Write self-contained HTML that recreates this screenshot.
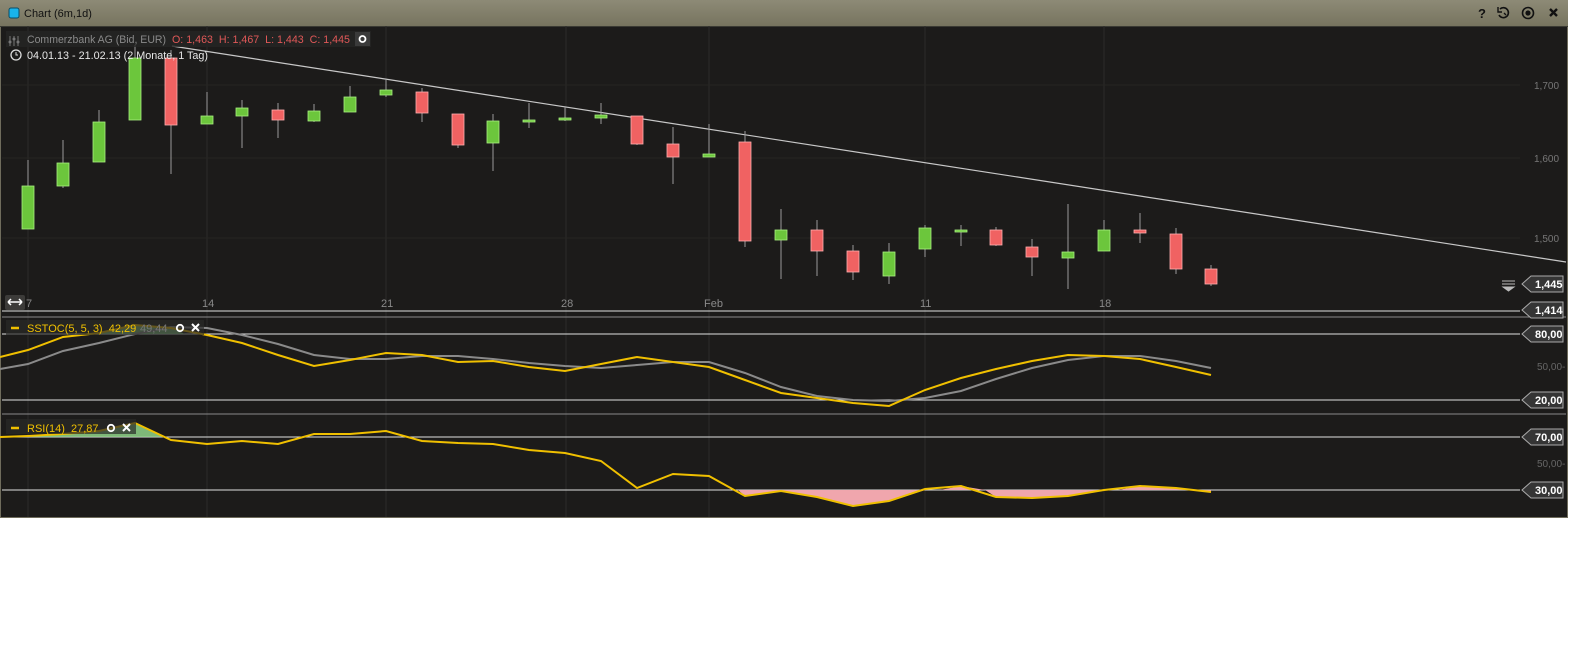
<!DOCTYPE html>
<html><head><meta charset="utf-8"><style>
body{margin:0;width:1578px;height:648px;background:#fff;overflow:hidden;font-family:"Liberation Sans",sans-serif}
#w{position:absolute;left:0;top:0;width:1568px;height:518px;background:#1c1b1a;border:1px solid #6f6c5c;box-sizing:border-box}
#t{position:absolute;left:0;top:0;width:1568px;height:26px;background:linear-gradient(#8d8a76,#77745f);border-bottom:1px solid #3a3a33}
svg{position:absolute;left:0;top:0}
</style></head><body>
<div id="w"></div>
<div id="t"></div>
<svg id="s" width="1578" height="648" font-family="Liberation Sans, sans-serif"></svg>
<script>
var s=document.getElementById('s'),h='';
function L(x1,y1,x2,y2,c,w){h+='<line x1="'+x1+'" y1="'+y1+'" x2="'+x2+'" y2="'+y2+'" stroke="'+c+'" stroke-width="'+(w||1)+'"/>';}
function T(x,y,t,c,sz,a,wt,tl){h+='<text x="'+x+'" y="'+y+'" fill="'+c+'" font-size="'+(sz||11)+'"'+(a?' text-anchor="'+a+'"':'')+(wt?' font-weight="bold"':'')+(tl?' textLength="'+tl+'" lengthAdjust="spacingAndGlyphs"':'')+'>'+t+'</text>';}
h+='<rect x="9" y="8" width="10" height="10" rx="2" fill="#19b4ec" stroke="#0a4d66"/>';
T(24,17,'Chart (6m,1d)','#111',11);
T(1478,18,'?','#111',13,null,1);
h+='<path d="M1500 9 a5 5 0 1 1 -1 6" fill="none" stroke="#111" stroke-width="1.6"/><path d="M1498 7 v5 h4" fill="none" stroke="#111" stroke-width="1.4"/><line x1="1504" y1="13" x2="1506" y2="15" stroke="#111" stroke-width="1.3"/>';
h+='<circle cx="1528" cy="13" r="5.5" fill="none" stroke="#111" stroke-width="1.6"/><circle cx="1528" cy="13" r="2.6" fill="#111"/>';
h+='<path d="M1550 9 l7 7 M1557 9 l-7 7" stroke="#111" stroke-width="2.4"/>';
[28,207,386,566,709,925,1104].forEach(function(x){L(x,26,x,517,'#2c2b29');});
[85,158,238].forEach(function(y){L(2,y,1520,y,'#262523');});
L(172,46,1566,262,'#c8c8c8',1.2);
var c=[[28,186,229,160,229,1],[63,163,186,140,188,1],[99,122,162,110,162,1],[135,58,120,45,120,1],[171,58,125,50,174,0],[207,116,124,92,124,1],[242,108,116,100,148,1],[278,110,120,103,138,0],[314,111,121,104,122,1],[350,97,112,86,112,1],[386,90,95,80,97,1],[422,92,113,88,122,0],[458,114,145,114,148,0],[493,121,143,114,171,1],[529,120,121,103,128,1],[565,118,119,107,121,1],[601,115,118,103,124,1],[637,116,144,116,145,0],[673,144,157,127,184,0],[709,154,157,124,157,1],[745,142,241,131,247,0],[781,230,240,209,279,1],[817,230,251,220,276,0],[853,251,272,245,280,0],[889,252,276,243,284,1],[925,228,249,225,257,1],[961,230,231,225,246,1],[996,230,245,227,246,0],[1032,247,257,239,276,0],[1068,252,258,204,289,1],[1104,230,251,220,251,1],[1140,230,233,213,243,0],[1176,234,269,228,274,0],[1211,269,284,265,286,0]];
c.forEach(function(k){var x=k[0];L(x,k[3],x,k[4],'#9a9a9a');var f=k[5]?'#6cc63c':'#f06262',st=k[5]?'#a8f080':'#ffb0b0';h+='<rect x="'+(x-6)+'" y="'+k[1]+'" width="12" height="'+Math.max(2,k[2]-k[1])+'" fill="'+f+'" stroke="'+st+'" stroke-width="0.8"/>';});
h+='<rect x="6" y="31" width="365" height="16" fill="#262524" opacity=".8"/>';
T(27,43,'Commerzbank AG (Bid, EUR)','#8a8a8a',11,null,0,139);
T(172,43,'O: 1,463&#160; H: 1,467&#160; L: 1,443&#160; C: 1,445','#e05858',11,null,0,178);
h+='<path d="M10 36v10M14 36v10M18 36v10" stroke="#777" stroke-width="1"/><circle cx="10" cy="42" r="1.5" fill="#777"/><circle cx="14" cy="39" r="1.5" fill="#777"/><circle cx="18" cy="42" r="1.5" fill="#777"/>';
h+='<rect x="355" y="32" width="15" height="14" fill="#3a3a3a"/><circle cx="362.5" cy="39" r="3" fill="none" stroke="#fff" stroke-width="1.8"/>';
h+='<circle cx="16" cy="55" r="5" fill="none" stroke="#ddd" stroke-width="1.3"/><path d="M16 52v3h2" stroke="#ddd" fill="none"/>';
T(27,59,'04.01.13 - 21.02.13 (2 Monate, 1 Tag)','#e8e8e8',11,null,0,181);
[[28,'7'],[207,'14'],[386,'21'],[566,'28'],[709,'Feb'],[925,'11'],[1104,'18']].forEach(function(a){T(a[0]-(a[1]=='7'?2:5),307,a[1],'#8a8a8a',11);});
h+='<rect x="5" y="295" width="20" height="15" rx="2" fill="#3c3b39"/><path d="M8 302h14M8 302l3-3M8 302l3 3M22 302l-3-3M22 302l-3 3" stroke="#fff" stroke-width="1.5"/>';
L(2,311,1520,311,'#e0e0e0');L(2,317,1566,317,'#8a8a8a');
L(2,334,1520,334,'#e0e0e0');L(2,400,1520,400,'#e0e0e0');L(2,414,1566,414,'#8a8a8a');
L(2,437,1520,437,'#e0e0e0');L(2,490,1520,490,'#e0e0e0');
var X=[0,28,63,99,135,171,207,242,278,314,350,386,422,458,493,529,565,601,637,673,709,745,781,817,853,889,925,961,996,1032,1068,1104,1140,1176,1211];
var SY=[357,350,337,333,325,328,335,343,355,366,360,353,355,362,361,367,371,364,357,362,367,380,393,398,403,406,390,378,369,361,355,356,359,367,375];
var SG=[369,364,351,343,334,327,328,335,344,355,359,359,356,356,359,363,366,368,365,362,362,373,387,396,400,401,398,391,379,368,360,356,356,361,368];
var RY=[437,436,434,431,423,440,444,441,444,434,434,431,441,443,444,450,453,461,488,474,476,496,491,497,506,501,489,486,497,498,496,490,486,488,492];
function P(Y){return X.map(function(x,i){return x+','+Y[i];}).join(' ');}
h+='<polygon points="95,334 99,333 135,325 171,328 185,334" fill="#8fd48a" opacity=".85"/>';
h+='<polygon points="0,437 28,436 63,434 99,431 135,423 165,437" fill="#8fd48a" opacity=".85"/>';
h+='<polygon points="738,490 745,496 781,491 817,497 853,506 889,501 925,490" fill="#f0a6ad"/>';
h+='<polygon points="940,490 961,486 985,490 996,497 1032,498 1068,496 1104,490" fill="#f0a6ad"/>';
h+='<polygon points="1118,490 1140,486 1176,488 1211,492 1211,490" fill="#f0a6ad"/>';
h+='<polyline points="'+P(SG)+'" fill="none" stroke="#8a8a8a" stroke-width="2"/>';
h+='<polyline points="'+P(SY)+'" fill="none" stroke="#f0c000" stroke-width="2"/>';
h+='<polyline points="'+P(RY)+'" fill="none" stroke="#f0c000" stroke-width="2"/>';
h+='<rect x="6" y="320" width="198" height="15" fill="#2a2928" opacity=".7"/>';
L(11,328,19,328,'#f0c000',2.5);T(27,332,'SSTOC(5, 5, 3)&#160; 42,29','#f0c000',11);T(140,332,'49,44','#777',11);
h+='<circle cx="180" cy="328" r="3.2" fill="none" stroke="#fff" stroke-width="1.8"/><path d="M192 324l7 7M199 324l-7 7" stroke="#fff" stroke-width="2"/>';
h+='<rect x="6" y="419" width="130" height="15" fill="#2a2928" opacity=".7"/>';
L(11,428,19,428,'#f0c000',2.5);T(27,432,'RSI(14)&#160; 27,87','#f0c000',11);
h+='<circle cx="111" cy="428" r="3.2" fill="none" stroke="#fff" stroke-width="1.8"/><path d="M123 424l7 7M130 424l-7 7" stroke="#fff" stroke-width="2"/>';
function tag(y,t){h+='<path d="M1522 '+y+' l9 -8 h32 v16 h-32 z" fill="#353535" stroke="#aaa" stroke-width="1"/>';T(1535,y+4,t,'#fff',11,null,1);}
tag(284,'1,445');tag(310,'1,414');tag(334,'80,00');tag(400,'20,00');tag(437,'70,00');tag(490,'30,00');
h+='<path d="M1502 281h13M1502 284h13M1503 287h11l-5.5 4z" stroke="#bbb" fill="#bbb" stroke-width="1"/>';
T(1534,89,'1,700','#777',10);T(1534,162,'1,600','#777',10);T(1534,242,'1,500','#777',10);
T(1537,370,'50,00-','#666',10);T(1537,467,'50,00-','#666',10);
s.innerHTML=h;
</script>
</body></html>
